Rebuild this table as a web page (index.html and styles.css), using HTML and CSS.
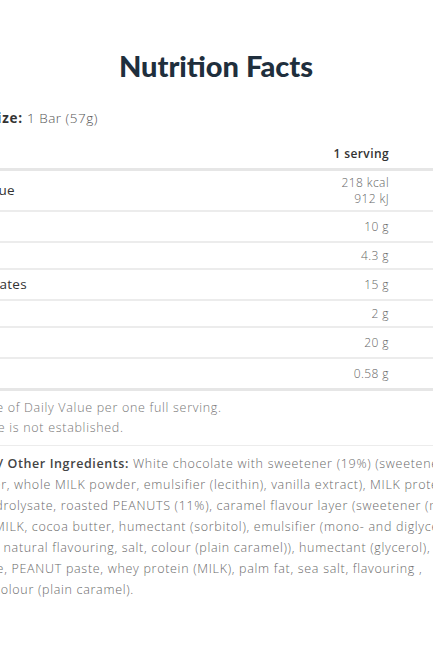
FILE: index.html
```
<!DOCTYPE html>
<html lang="en">
<head>
<meta charset="utf-8">
<title>Nutrition Facts</title>
<link rel="stylesheet" href="styles.css">
</head>
<body>
<main class="panel">
  <h2 class="title">Nutrition Facts</h2>
  <p class="serving"><strong>Serving size:</strong> 1 Bar (57g)</p>
  <table class="facts">
    <thead>
      <tr><th class="name"></th><th class="val">1 serving</th><th class="dv"></th></tr>
    </thead>
    <tbody>
      <tr class="energy"><td class="name">Energy Value</td><td class="val">218 kcal<br>912 kJ</td><td class="dv"></td></tr>
      <tr class="main"><td class="name">Fat</td><td class="val">10 g</td><td class="dv"></td></tr>
      <tr class="sub"><td class="name">Saturates</td><td class="val">4.3 g</td><td class="dv"></td></tr>
      <tr class="main"><td class="name">Carbohydrates</td><td class="val">15 g</td><td class="dv"></td></tr>
      <tr class="sub"><td class="name">Sugars</td><td class="val">2 g</td><td class="dv"></td></tr>
      <tr class="main"><td class="name">Protein</td><td class="val">20 g</td><td class="dv"></td></tr>
      <tr class="main last"><td class="name">Salt</td><td class="val">0.58 g</td><td class="dv"></td></tr>
    </tbody>
  </table>
  <div class="notes">
    <p><span class="mark">*</span>Percentage of Daily Value per one full serving.</p>
    <p><span class="mark">**</span>Daily Value is not established.</p>
  </div>
  <div class="ingredients">
    <span class="line"><strong>Ingredients / Other Ingredients:</strong> White chocolate with sweetener (19%) (sweetener (maltitol),</span>
    <span class="line">cocoa butter, whole MILK powder, emulsifier (lecithin), vanilla extract), MILK protein, MILK</span>
    <span class="line">(protein hydrolysate, roasted PEANUTS (11%), caramel flavour layer (sweetener (maltitol),</span>
    <span class="line">(maltitol)), MILK, cocoa butter, humectant (sorbitol), emulsifier (mono- and diglycerides),</span>
    <span class="line">sweetener), natural flavouring, salt, colour (plain caramel)), humectant (glycerol),</span>
    <span class="line">whey isolate, PEANUT paste, whey protein (MILK), palm fat, sea salt, flavouring ,</span>
    <span class="line">sucralose, colour (plain caramel).</span>
  </div>
</main>
</body>
</html>
```
FILE: styles.css
```
html, body {
  margin: 0;
  padding: 0;
  overflow: hidden;
  background: #ffffff;
}

body {
  font-family: "Open Sans", "Noto Sans", sans-serif;
  color: #333;
}

.panel {
  width: 572px;
  margin-left: -70px;
  padding-top: 50px;
}

.title {
  margin: 0;
  text-align: center;
  font-family: "Lato", sans-serif;
  font-weight: 900;
  font-size: 29px;
  line-height: 32px;
  color: #1f2f3d;
}

.serving {
  margin: 26px 0 12px;
  font-size: 13.5px;
  line-height: 20px;
  letter-spacing: 0.5px;
  color: #555;
  font-weight: 300;
}

.serving strong {
  font-weight: 700;
  letter-spacing: 0.8px;
  color: #333;
}

.facts {
  width: 100%;
  border-collapse: collapse;
}

.facts th {
  padding: 6px 0;
  font-size: 12px;
  line-height: 16px;
  font-weight: 600;
  letter-spacing: 0.3px;
  color: #333;
  border-bottom: 3px solid #e6e6e6;
}

.facts td {
  border-bottom: 2px solid #ececec;
  vertical-align: middle;
}

.facts .name {
  text-align: left;
  font-size: 13.5px;
  font-weight: 400;
  letter-spacing: 0.3px;
  color: #333;
}

.facts .val {
  text-align: right;
  width: 120px;
  font-size: 12px;
  font-weight: 300;
  letter-spacing: 0.4px;
  color: #666;
}

.facts th.val {
  font-weight: 600;
  color: #333;
}

.facts .dv {
  width: 113px;
}

.energy td {
  padding: 4px 0;
  line-height: 15.5px;
}

.main td {
  padding: 6px 0;
  line-height: 17px;
}

.sub td {
  padding: 4px 0;
  line-height: 17px;
}

.main.last td {
  border-bottom: 3px solid #e6e6e6;
}

.notes {
  padding: 7px 0 7px;
  border-bottom: 1px solid #ececec;
}

.notes p {
  margin: 0;
  font-size: 12.5px;
  line-height: 20px;
  letter-spacing: 0.7px;
  font-weight: 300;
  color: #777;
}

.notes .mark {
  font-size: 6px;
  line-height: 0;
  letter-spacing: 0;
}

.ingredients {
  margin-left: -3px;
  padding-top: 7px;
  font-size: 12.5px;
  line-height: 21px;
  letter-spacing: 0.7px;
  font-weight: 300;
  color: #6a6a6a;
}

.ingredients .line {
  display: block;
  white-space: nowrap;
}

.ingredients .line:first-child {
  text-indent: -8px;
}

.ingredients strong {
  font-weight: 600;
  letter-spacing: 0.6px;
  color: #444;
}
```
